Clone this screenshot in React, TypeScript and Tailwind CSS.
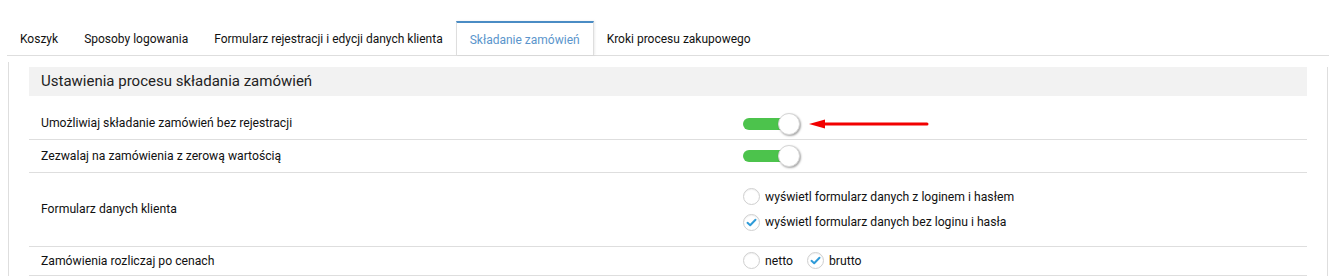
const tabs = [
  "Koszyk",
  "Sposoby logowania",
  "Formularz rejestracji i edycji danych klienta",
  "Składanie zamówień",
  "Kroki procesu zakupowego",
];

function Toggle() {
  return (
    <div className="relative h-[22px] w-[57px]">
      <div className="absolute left-0 top-[5px] h-[12px] w-[46px] rounded-full bg-[#4cc34c]" />
      <div className="absolute left-[35px] top-0 h-[22px] w-[22px] rounded-full bg-white border border-[#d6d6d6] shadow-[1px_1px_2px_rgba(0,0,0,0.35)]" />
    </div>
  );
}

function Radio({ checked, label }: { checked?: boolean; label: string }) {
  return (
    <div className="flex items-center gap-[5px]">
      <span className="flex h-[17px] w-[17px] items-center justify-center rounded-full border border-[#cfcfcf] bg-white shadow-[inset_0_1px_1px_rgba(0,0,0,0.06)]">
        {checked && (
          <svg width="11" height="9" viewBox="0 0 11 9">
            <path d="M1.5 4.8 L4.2 7.2 L9.5 1.8" fill="none" stroke="#2f9bd8" strokeWidth="2" strokeLinecap="round" strokeLinejoin="round" />
          </svg>
        )}
      </span>
      <span>{label}</span>
    </div>
  );
}

function Arrow() {
  return (
    <svg width="120" height="12" viewBox="0 0 120 12" className="ml-[9px]">
      <path d="M0 6 L16 1.5 L16 10.5 Z" fill="#f20000" />
      <line x1="14" y1="6" x2="118" y2="6" stroke="#f20000" strokeWidth="3" strokeLinecap="round" />
    </svg>
  );
}

export default function App() {
  return (
    <div className="bg-white text-[12.2px] text-[#111] font-['Roboto','Liberation_Sans',sans-serif]">
      <div className="mx-[7px] mt-[21px] flex border-b border-[#dedede] text-[12px]">
        {tabs.map((t) => {
          const active = t === "Składanie zamówień";
          return (
            <div
              key={t}
              className={
                active
                  ? "flex h-[34px] items-center border-x border-t-2 border-x-[#dedede] border-t-[#4a8cc4] px-[13px] pt-[1px] text-[#5a95cc] shadow-[1px_0_2px_rgba(0,0,0,0.08)]"
                  : "flex h-[34px] items-center px-[13px] pt-[2px]"
              }
            >
              {t}
            </div>
          );
        })}
      </div>

      <div className="ml-[8px] mr-[8px] mt-[6px] border-l border-[#dedede] pt-[5px]">
        <div className="border-r border-[#dedede] px-[20px]">
          <div className="flex h-[29px] items-center bg-[#f2f2f2] pl-[12px] text-[15px] text-[#222]">
            Ustawienia procesu składania zamówień
          </div>

          <div className="mt-[12px] grid h-[32px] grid-cols-[714px_1fr] items-center border-b border-[#dedede]">
            <div className="pl-[12px]">Umożliwiaj składanie zamówień bez rejestracji</div>
            <div className="flex items-center">
              <Toggle />
              <Arrow />
            </div>
          </div>

          <div className="grid h-[33px] grid-cols-[714px_1fr] items-center border-b border-[#dedede]">
            <div className="pl-[12px]">Zezwalaj na zamówienia z zerową wartością</div>
            <div className="flex items-center">
              <Toggle />
            </div>
          </div>

          <div className="grid h-[74px] grid-cols-[714px_1fr] items-center border-b border-[#dedede]">
            <div className="pl-[12px]">Formularz danych klienta</div>
            <div className="flex flex-col gap-[7px]">
              <Radio label="wyświetl formularz danych z loginem i hasłem" />
              <Radio checked label="wyświetl formularz danych bez loginu i hasła" />
            </div>
          </div>

          <div className="grid h-[29px] grid-cols-[714px_1fr] items-center border-b border-[#dedede]">
            <div className="pl-[12px]">Zamówienia rozliczaj po cenach</div>
            <div className="flex items-center gap-[14px]">
              <Radio label="netto" />
              <Radio checked label="brutto" />
            </div>
          </div>
        </div>
      </div>
    </div>
  );
}
